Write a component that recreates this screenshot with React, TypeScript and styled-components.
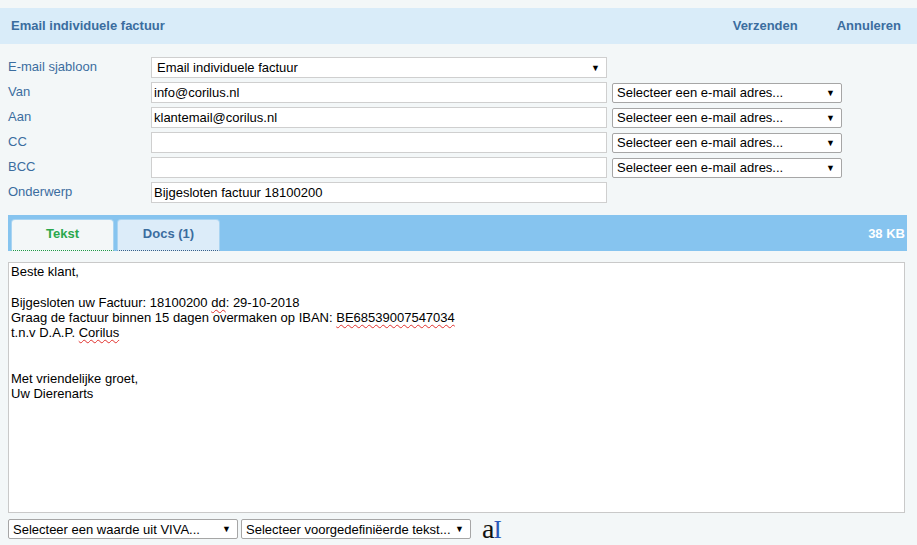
import * as React from 'react';
import styled, { createGlobalStyle } from 'styled-components';

const GlobalStyle = createGlobalStyle`
  html, body {
    margin: 0;
    padding: 0;
    background: #f3f7f8;
  }
  body {
    font-family: 'Liberation Sans', Arial, sans-serif;
    font-size: 13px;
  }
`;

const blue = '#3b6d9f';

const Page = styled.div`
  width: 917px;
  padding-top: 8px;
  box-sizing: border-box;
`;

const Header = styled.div`
  height: 36px;
  background: #d9ecf9;
  display: flex;
  align-items: center;
  padding: 0 16px 1px 11px;
  box-sizing: border-box;
  color: ${blue};
  font-weight: bold;
  font-size: 13px;
`;

const Title = styled.div`
  flex-grow: 1;
`;

const HeaderLink = styled.a`
  color: ${blue};
  text-decoration: none;
  margin-left: 39px;
  cursor: pointer;
`;

const Form = styled.div`
  display: flex;
  flex-direction: column;
  gap: 4px;
  padding: 13px 0 0 8px;
`;

const Row = styled.div`
  display: flex;
  align-items: center;
  height: 21px;
`;

const Label = styled.div`
  width: 143px;
  color: ${blue};
  margin-top: -3px;
`;

const Field = styled.div<{ $width?: number }>`
  width: ${(p) => p.$width ?? 456}px;
  height: 21px;
  box-sizing: border-box;
  border: 1px solid #cfcfcf;
  background: #fff;
  padding: 0 2px;
  line-height: 19px;
  color: #000;
  white-space: nowrap;
  overflow: hidden;
`;

const Select = styled.div<{ $width: number; $dark?: boolean; $height?: number }>`
  width: ${(p) => p.$width}px;
  height: ${(p) => p.$height ?? 20}px;
  box-sizing: border-box;
  border: 1px solid ${(p) => (p.$dark ? '#a6a6a6' : '#cfcfcf')};
  border-radius: ${(p) => (p.$dark ? 2 : 0)}px;
  background: #fff;
  display: flex;
  align-items: center;
  padding: 0 4px 0 ${(p) => (p.$dark ? 4 : 5)}px;
  color: #000;
  white-space: nowrap;
`;

const SelectText = styled.span`
  flex-grow: 1;
  overflow: hidden;
`;

const Arrow = styled.span`
  font-size: 9px;
  margin-left: 4px;
  margin-right: 2px;
`;

const Side = styled.div`
  margin-left: 5px;
`;

const TabBar = styled.div`
  margin: 12px 10px 0 8px;
  height: 36px;
  background: #86c4ef;
  display: flex;
  align-items: flex-end;
  padding-left: 3px;
  gap: 3px;
`;

const Tab = styled.div<{ $active?: boolean }>`
  width: 103px;
  height: 32px;
  box-sizing: border-box;
  border: 1px solid #a9d4f2;
  border-bottom: 1px dotted ${(p) => (p.$active ? '#1e9a45' : '#3b5f86')};
  border-radius: 4px 4px 0 0;
  background: ${(p) => (p.$active ? '#f3f7f8' : '#dcecf9')};
  color: ${(p) => (p.$active ? '#2aa84c' : blue)};
  font-weight: bold;
  display: flex;
  align-items: center;
  justify-content: center;
  padding-bottom: 3px;
`;

const Size = styled.div`
  margin-left: auto;
  align-self: center;
  color: #fff;
  font-weight: bold;
  padding-right: 2px;
`;

const Editor = styled.div`
  margin: 11px 12px 0 8px;
  height: 251px;
  box-sizing: border-box;
  border: 1px solid #c9c9c9;
  background: #fff;
  padding: 1px 2px;
  line-height: 15.25px;
  color: #000;
`;

const Line = styled.div`
  min-height: 15.25px;
`;

const Misspelled = styled.span`
  text-decoration: underline wavy #e0302c;
  text-decoration-thickness: 1px;
  text-underline-offset: 2px;
`;

const Footer = styled.div`
  display: flex;
  align-items: center;
  gap: 3px;
  padding: 6px 0 0 8px;
  height: 20px;
`;

const Cursor = styled.div`
  display: flex;
  align-items: baseline;
  margin-left: 8px;
  font-family: 'Liberation Serif', 'Times New Roman', serif;
  line-height: 20px;
  height: 20px;
`;

const SerifA = styled.span`
  font-size: 28px;
  color: #111;
`;

const IBeam = styled.span`
  font-size: 25px;
  color: #2a58b8;
  margin-left: -1px;
`;

const rows = [
  { label: 'Van', value: 'info@corilus.nl', side: true },
  { label: 'Aan', value: 'klantemail@corilus.nl', side: true },
  { label: 'CC', value: '', side: true },
  { label: 'BCC', value: '', side: true },
  { label: 'Onderwerp', value: 'Bijgesloten factuur 18100200', side: false },
];

const App: React.FunctionComponent = () => {
  return (
    <Page>
      <GlobalStyle />
      <Header>
        <Title>Email individuele factuur</Title>
        <HeaderLink>Verzenden</HeaderLink>
        <HeaderLink>Annuleren</HeaderLink>
      </Header>

      <Form>
        <Row>
          <Label>E-mail sjabloon</Label>
          <Select $width={456} $height={21}>
            <SelectText>Email individuele factuur</SelectText>
            <Arrow>▼</Arrow>
          </Select>
        </Row>
        {rows.map((r) => (
          <Row key={r.label}>
            <Label>{r.label}</Label>
            <Field>{r.value}</Field>
            {r.side && (
              <Side>
                <Select $width={230} $dark>
                  <SelectText>Selecteer een e-mail adres...</SelectText>
                  <Arrow>▼</Arrow>
                </Select>
              </Side>
            )}
          </Row>
        ))}
      </Form>

      <TabBar>
        <Tab $active>Tekst</Tab>
        <Tab>Docs (1)</Tab>
        <Size>38 KB</Size>
      </TabBar>

      <Editor>
        <Line>Beste klant,</Line>
        <Line />
        <Line>
          Bijgesloten uw Factuur: 18100200 <Misspelled>dd</Misspelled>: 29-10-2018
        </Line>
        <Line>
          Graag de factuur binnen 15 dagen overmaken op IBAN: <Misspelled>BE68539007547034</Misspelled>
        </Line>
        <Line>
          t.n.v D.A.P. <Misspelled>Corilus</Misspelled>
        </Line>
        <Line />
        <Line />
        <Line>Met vriendelijke groet,</Line>
        <Line>Uw Dierenarts</Line>
      </Editor>

      <Footer>
        <Select $width={230} $dark>
          <SelectText>Selecteer een waarde uit VIVA...</SelectText>
          <Arrow>▼</Arrow>
        </Select>
        <Select $width={230} $dark>
          <SelectText>Selecteer voorgedefiniëerde tekst...</SelectText>
          <Arrow>▼</Arrow>
        </Select>
        <Cursor>
          <SerifA>a</SerifA>
          <IBeam>I</IBeam>
        </Cursor>
      </Footer>
    </Page>
  );
};

export default App;
